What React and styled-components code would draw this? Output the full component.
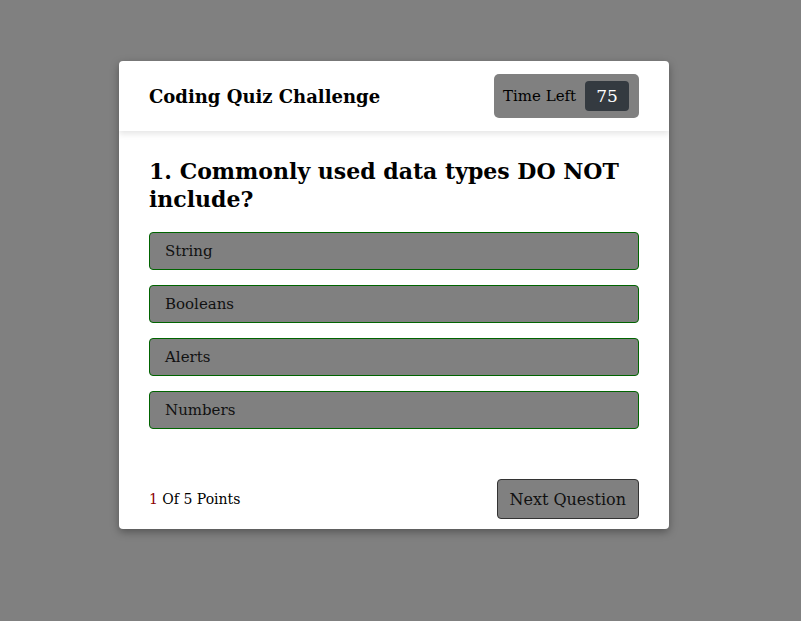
import React from 'react';
import styled, { createGlobalStyle } from 'styled-components';

const GlobalStyle = createGlobalStyle`
  html, body {
    margin: 0;
    padding: 0;
    background: #808080;
    font-family: Georgia, "DejaVu Serif", serif;
  }
`;

const Page = styled.div`
  padding: 61px 0 0 119px;
  min-height: 621px;
  box-sizing: border-box;
`;

const Card = styled.div`
  width: 550px;
  background: #ffffff;
  border-radius: 4px;
  box-shadow: 0 3px 8px rgba(0, 0, 0, 0.35);
  overflow: hidden;
`;

const Header = styled.div`
  height: 70px;
  display: flex;
  align-items: center;
  justify-content: space-between;
  padding: 0 30px;
  box-sizing: border-box;
  box-shadow: 0 3px 6px rgba(0, 0, 0, 0.1);
  position: relative;
`;

const Title = styled.h1`
  margin: 0;
  font-size: 18px;
  font-weight: bold;
  color: #000;
`;

const Timer = styled.div`
  display: flex;
  align-items: center;
  justify-content: space-between;
  width: 145px;
  height: 44px;
  padding: 0 10px 0 9px;
  box-sizing: border-box;
  background: #808080;
  border-radius: 5px;
  font-size: 15px;
  color: #000;
`;

const TimeValue = styled.span`
  display: flex;
  align-items: center;
  justify-content: center;
  width: 44px;
  height: 30px;
  background: #343a40;
  border-radius: 4px;
  color: #fff;
  font-size: 17px;
`;

const Body = styled.div`
  padding: 26px 30px 0;
`;

const Question = styled.h2`
  margin: 0 0 19px;
  font-size: 22px;
  line-height: 28px;
  font-weight: bold;
  color: #000;
`;

const Options = styled.div`
  display: flex;
  flex-direction: column;
  gap: 15px;
`;

const Option = styled.button`
  display: block;
  width: 100%;
  height: 38px;
  padding: 0 15px;
  text-align: left;
  background: #808080;
  border: 1px solid #006400;
  border-radius: 4px;
  font-family: inherit;
  font-size: 15px;
  color: #111;
  cursor: pointer;
`;

const Footer = styled.div`
  display: flex;
  align-items: center;
  justify-content: space-between;
  padding: 50px 30px 10px;
`;

const Score = styled.div`
  font-size: 14px;
  color: #000;
`;

const Current = styled.span`
  color: #8b0000;
`;

const NextButton = styled.button`
  height: 40px;
  padding: 0 12px 0 11px;
  background: #808080;
  border: 1px solid #333;
  border-radius: 4px;
  font-family: inherit;
  font-size: 16px;
  color: #111;
  cursor: pointer;
`;

const answers = ['String', 'Booleans', 'Alerts', 'Numbers'];

export default function App() {
  return (
    <>
      <GlobalStyle />
      <Page>
        <Card>
          <Header>
            <Title>Coding Quiz Challenge</Title>
            <Timer>
              Time Left
              <TimeValue>75</TimeValue>
            </Timer>
          </Header>
          <Body>
            <Question>1. Commonly used data types DO NOT include?</Question>
            <Options>
              {answers.map((a) => (
                <Option key={a}>{a}</Option>
              ))}
            </Options>
          </Body>
          <Footer>
            <Score>
              <Current>1</Current> Of 5 Points
            </Score>
            <NextButton>Next Question</NextButton>
          </Footer>
        </Card>
      </Page>
    </>
  );
}
